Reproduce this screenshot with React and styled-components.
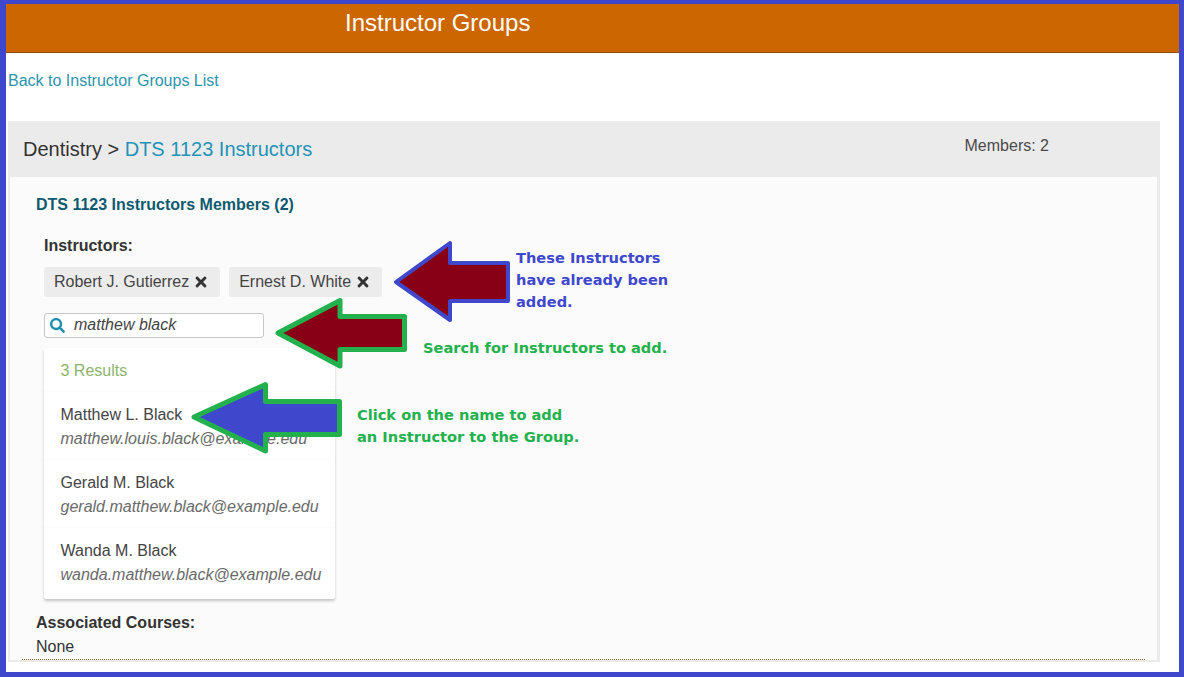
import React from "react";
import styled, { createGlobalStyle } from "styled-components";
import { FaTimes, FaSearch } from "react-icons/fa";

const GlobalStyle = createGlobalStyle`
  html, body {
    margin: 0;
    padding: 0;
    background: #fff;
  }
  * {
    box-sizing: border-box;
  }
`;

const Frame = styled.div`
  position: relative;
  width: 1184px;
  height: 677px;
  overflow: hidden;
  background: #fff;
  border-style: solid;
  border-color: #3f48cc;
  border-width: 4px 5px 5px 6px;
  font-family: "Liberation Sans", Arial, sans-serif;
  font-size: 16px;
  color: #333;
`;

const TopBar = styled.header`
  height: 49px;
  padding-left: 339px;
  background: #cc6600;
  border-bottom: 1px solid #8f4d0c;
  color: #fff;
  font-size: 24px;
  line-height: 38px;
`;

const BackLink = styled.a`
  display: block;
  margin: 18px 0 0 2px;
  height: 50px;
  line-height: 20px;
  color: #2b95ad;
  text-decoration: none;
`;

const Panel = styled.section`
  width: 1152px;
  height: 541px;
  margin-left: 2px;
  background: #ecebeb;
  padding: 0 3px 2px 2px;
  display: flex;
  flex-direction: column;
`;

const PanelHead = styled.div`
  height: 56px;
  flex: none;
  display: flex;
  justify-content: space-between;
  padding: 0 108px 0 13px;
`;

const Crumb = styled.h2`
  margin: 16px 0 0;
  font-size: 20px;
  font-weight: 400;
  line-height: 24px;
  color: #333;
`;

const CrumbLink = styled.a`
  color: #1f93b8;
`;

const Count = styled.div`
  margin-top: 16px;
  line-height: 18px;
  color: #4a4a4a;
`;

const PanelBody = styled.div`
  flex: 1;
  background: #fbfbfb;
  padding: 19px 0 0 26px;
`;

const GroupTitle = styled.h3`
  margin: 0;
  font-size: 16px;
  font-weight: 700;
  line-height: 18px;
  color: #0f5a6e;
`;

const Editor = styled.div`
  padding: 23px 0 0 8px;
`;

const FieldLabel = styled.div`
  font-weight: 700;
  line-height: 18px;
  color: #333;
`;

const ChipRow = styled.div`
  display: flex;
  gap: 9px;
  margin-top: 12px;
`;

const Chip = styled.span`
  display: flex;
  align-items: center;
  gap: 6px;
  height: 30px;
  padding: 0 13px 0 10px;
  border-radius: 3px;
  background: #ececec;
  color: #444;
  svg {
    width: 12px;
    height: 16px;
    color: #333;
  }
`;

const SearchBox = styled.label`
  display: flex;
  align-items: center;
  width: 220px;
  height: 25px;
  margin-top: 16px;
  padding-left: 5px;
  background: #fff;
  border: 1px solid #c8c8c8;
  border-radius: 3px;
  svg {
    width: 15px;
    height: 15px;
    color: #1f8fb0;
    flex: none;
  }
`;

const SearchInput = styled.input`
  flex: 1;
  min-width: 0;
  margin-left: 9px;
  padding: 0 0 2px;
  border: 0;
  outline: 0;
  background: transparent;
  font: italic 16px "Liberation Sans", Arial, sans-serif;
  color: #444;
`;

const Results = styled.div`
  width: 291px;
  height: 251px;
  margin-top: 10px;
  background: #fff;
  border-radius: 2px;
  box-shadow: 0 2px 3px rgba(0, 0, 0, 0.22);
`;

const ResultCount = styled.div`
  height: 44px;
  padding: 14px 0 0 16.5px;
  line-height: 18px;
  color: #8cb56b;
  border-bottom: 1px solid #fcfcfc;
`;

const ResultItem = styled.div`
  height: 68px;
  padding: 11px 0 0 16.5px;
  border-bottom: ${(p) => (p.$last ? "0" : "1px solid #fcfcfc")};
`;

const ResultName = styled.div`
  line-height: 24px;
  color: #444;
`;

const ResultEmail = styled.div`
  font-style: italic;
  line-height: 24px;
  color: #6a6a6a;
  white-space: nowrap;
`;

const Courses = styled.div`
  margin: 12px 0 0;
  line-height: 24px;
`;

const CoursesLabel = styled.div`
  font-weight: 700;
  color: #333;
`;

const DottedRule = styled.hr`
  margin: 0 0 0 -14px;
  width: 1123px;
  height: 0;
  border: 0;
  border-top: 1px dotted #8a6a3a;
`;

const ArrowSvg = styled.svg`
  position: absolute;
  left: 0;
  top: 0;
  pointer-events: none;
`;

const Note = styled.div`
  position: absolute;
  left: ${(p) => p.$x - 6}px;
  top: ${(p) => p.$y - 4}px;
  font-family: "DejaVu Sans", Verdana, sans-serif;
  font-size: 14.6px;
  font-weight: 700;
  line-height: 22px;
  white-space: nowrap;
  color: ${(p) => p.$color};
`;

const people = [
  { name: "Matthew L. Black", email: "matthew.louis.black@example.edu" },
  { name: "Gerald M. Black", email: "gerald.matthew.black@example.edu" },
  { name: "Wanda M. Black", email: "wanda.matthew.black@example.edu" },
];

// callout arrows, in page coordinates minus the frame border
function Arrows() {
  return (
    <ArrowSvg width="1173" height="668" viewBox="6 4 1173 668">
      <polygon
        points="396,282 450,243 450,263 508,263 508,301 450,301 450,320"
        fill="#880015"
        stroke="#3f48cc"
        strokeWidth="4"
        strokeLinejoin="round"
      />
      <polygon
        points="278,333 340,300.5 340,316.5 404.5,316.5 404.5,349.5 340,349.5 340,366"
        fill="#880015"
        stroke="#22b14c"
        strokeWidth="5"
        strokeLinejoin="round"
      />
      <polygon
        points="194,417 265.5,384.5 265.5,401.5 339.5,401.5 339.5,434.5 265.5,434.5 265.5,451"
        fill="#3f48cc"
        stroke="#22b14c"
        strokeWidth="5"
        strokeLinejoin="round"
      />
    </ArrowSvg>
  );
}

function App() {
  return (
    <Frame>
      <GlobalStyle />
      <TopBar>Instructor Groups</TopBar>
      <BackLink>Back to Instructor Groups List</BackLink>
      <Panel>
        <PanelHead>
          <Crumb>
            Dentistry &gt; <CrumbLink>DTS 1123 Instructors</CrumbLink>
          </Crumb>
          <Count>Members: 2</Count>
        </PanelHead>
        <PanelBody>
          <GroupTitle>DTS 1123 Instructors Members (2)</GroupTitle>
          <Editor>
            <FieldLabel>Instructors:</FieldLabel>
            <ChipRow>
              <Chip>
                Robert J. Gutierrez <FaTimes />
              </Chip>
              <Chip>
                Ernest D. White <FaTimes />
              </Chip>
            </ChipRow>
            <SearchBox>
              <FaSearch />
              <SearchInput defaultValue="matthew black" />
            </SearchBox>
            <Results>
              <ResultCount>3 Results</ResultCount>
              {people.map((person, i) => (
                <ResultItem key={person.email} $last={i === people.length - 1}>
                  <ResultName>{person.name}</ResultName>
                  <ResultEmail>{person.email}</ResultEmail>
                </ResultItem>
              ))}
            </Results>
          </Editor>
          <Courses>
            <CoursesLabel>Associated Courses:</CoursesLabel>
            None
          </Courses>
          <DottedRule />
        </PanelBody>
      </Panel>
      <Arrows />
      <Note $x={516} $y={247} $color="#3f48cc">
        These Instructors
        <br />
        have already been
        <br />
        added.
      </Note>
      <Note $x={423} $y={337} $color="#22b14c">
        Search for Instructors to add.
      </Note>
      <Note $x={357} $y={404} $color="#22b14c">
        Click on the name to add
        <br />
        an Instructor to the Group.
      </Note>
    </Frame>
  );
}

export default App;
